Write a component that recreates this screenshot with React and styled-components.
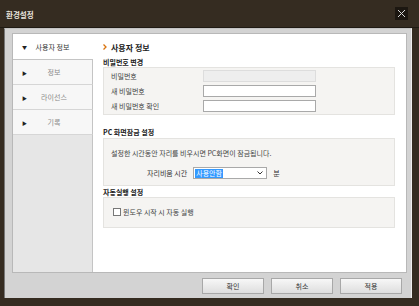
import React from 'react';
import styled, { createGlobalStyle } from 'styled-components';

const GlobalStyle = createGlobalStyle`
  html, body {
    margin: 0;
    padding: 0;
    background: #352c21;
  }
  * {
    box-sizing: border-box;
  }
  body {
    font-family: "Noto Sans CJK KR", "Noto Sans", sans-serif;
    font-size: 7px;
    color: #333;
  }
`;

const Window = styled.div`
  width: 419px;
  height: 306px;
  background: #352c21;
  display: flex;
  flex-direction: column;
  overflow: hidden;
`;

const TitleBar = styled.div`
  height: 28px;
  display: flex;
  align-items: center;
  justify-content: space-between;
  padding: 0 11px 1px 6px;
  border-bottom: 1px solid #1f1a13;
`;

const Title = styled.span`
  color: #e8e4de;
  font-size: 7.5px;
  font-weight: bold;
  margin-top: 2px;
`;

const CloseButton = styled.div`
  width: 13px;
  height: 13px;
  background: #1c1711;
  display: flex;
  align-items: center;
  justify-content: center;
`;

const Frame = styled.div`
  margin: 0 7px 8px 4px;
  flex: 1;
  background: #d3d3d3;
  border-left: 1px solid #777;
  border-top: 1px solid #c4c4c4;
  border-right: 1px solid #eee;
  padding: 4px 4px 0 7px;
  display: flex;
  flex-direction: column;
`;

const Panel = styled.div`
  height: 240px;
  background: #fff;
  border: 1px solid #b8b8b8;
  display: flex;
`;

const Sidebar = styled.div`
  width: 80px;
  display: flex;
  flex-direction: column;
`;

const NavItem = styled.div`
  height: ${p => (p.$active ? 26 : 25)}px;
  display: flex;
  align-items: center;
  padding-left: 9px;
  background: ${p => (p.$active ? '#fff' : '#f7f7f7')};
  border-right: ${p => (p.$active ? 'none' : '1px solid #c4c4c4')};
  border-bottom: 1px solid ${p => (p.$active ? '#c4c4c4' : '#d6d6d6')};
  color: ${p => (p.$active ? '#333' : '#8a8a8a')};
`;

const Arrow = styled.span`
  width: 4px;
  font-size: 5px;
  color: #222;
`;

const NavLabel = styled.span`
  flex: 1;
  text-align: center;
  padding-right: ${p => (p.$active ? 14 : 10)}px;
`;

const SideFill = styled.div`
  flex: 1;
  background: #e6e6e6;
  border-right: 1px solid #c4c4c4;
`;

const Main = styled.div`
  flex: 1;
  padding: 7px 11px 0 10px;
  display: flex;
  flex-direction: column;
`;

const PageHeader = styled.div`
  display: flex;
  align-items: center;
  gap: 4px;
  font-size: 8px;
  font-weight: bold;
  color: #222;
  height: 12px;
  margin-bottom: 4px;
`;

const SectionTitle = styled.div`
  font-weight: bold;
  color: #222;
  height: ${p => p.$h || 10}px;
  display: flex;
  align-items: ${p => (p.$bottom ? 'flex-end' : 'center')};
  padding-bottom: ${p => (p.$bottom ? 1 : 0)}px;
`;

const Box = styled.div`
  background: #f5f4f2;
  border: 1px solid #e4e3e0;
  padding: ${p => p.$pad || '0'};
  display: flex;
  flex-direction: column;
`;

const FormRow = styled.div`
  display: flex;
  align-items: center;
  height: ${p => p.$h || 15}px;
  padding-left: 7px;
`;

const Label = styled.span`
  width: 92px;
  color: #444;
`;

const TextInput = styled.div`
  width: 113px;
  height: 12px;
  background: ${p => (p.$disabled ? '#eeeeee' : '#fff')};
  border: 1px solid ${p => (p.$disabled ? '#ddd' : '#a9a9a9')};
`;

const Note = styled.div`
  color: #444;
  padding-left: 7px;
  height: 14px;
  display: flex;
  align-items: center;
`;

const SelectRow = styled.div`
  display: flex;
  align-items: center;
  padding-left: 43px;
  gap: 6px;
  height: 14px;
  margin-top: 6px;
`;

const Select = styled.div`
  width: 74px;
  height: 12px;
  background: #fff;
  border: 1px solid #a9a9a9;
  display: flex;
  align-items: center;
  justify-content: space-between;
  padding: 0 3px 0 1px;
`;

const Highlight = styled.span`
  background: #3399ff;
  color: #fff;
  padding: 0 1px;
  line-height: 9px;
`;

const CheckRow = styled.label`
  display: flex;
  align-items: center;
  gap: 2px;
  padding-left: 9px;
  color: #444;
`;

const CheckBox = styled.span`
  width: 8px;
  height: 8px;
  background: #fff;
  border: 1px solid #777;
`;

const Footer = styled.div`
  flex: 1;
  display: flex;
  justify-content: flex-end;
  align-items: flex-start;
  padding: 5px 5px 0 0;
  gap: 7px;
`;

const Button = styled.div`
  width: 62px;
  height: 16px;
  border: 1px solid #a8a8a8;
  background: linear-gradient(#f7f7f7, #dedede);
  display: flex;
  align-items: center;
  justify-content: center;
  color: #333;
`;

const navItems = ['정보', '라이선스', '기록'];

export default function App() {
  return (
    <Window>
      <GlobalStyle />
      <TitleBar>
        <Title>환경설정</Title>
        <CloseButton>
          <svg width="9" height="9" viewBox="0 0 9 9">
            <path d="M1 1L8 8M8 1L1 8" stroke="#d8d8d8" strokeWidth="1" />
          </svg>
        </CloseButton>
      </TitleBar>
      <Frame>
        <Panel>
          <Sidebar>
            <NavItem $active>
              <Arrow>▼</Arrow>
              <NavLabel $active>사용자 정보</NavLabel>
            </NavItem>
            {navItems.map(item => (
              <NavItem key={item}>
                <Arrow>▶</Arrow>
                <NavLabel>{item}</NavLabel>
              </NavItem>
            ))}
            <SideFill />
          </Sidebar>
          <Main>
            <PageHeader>
              <svg width="4" height="6" viewBox="0 0 4 6">
                <path d="M0.5 0.5L3 3L0.5 5.5" stroke="#d9730d" strokeWidth="1.3" fill="none" />
              </svg>
              사용자 정보
            </PageHeader>
            <SectionTitle>비밀번호 변경</SectionTitle>
            <Box $pad="1px 0 1px">
              <FormRow $h={14}>
                <Label>비밀번호</Label>
                <TextInput $disabled />
              </FormRow>
              <FormRow>
                <Label>새 비밀번호</Label>
                <TextInput />
              </FormRow>
              <FormRow>
                <Label>새 비밀번호 확인</Label>
                <TextInput />
              </FormRow>
            </Box>
            <SectionTitle $h={23} $bottom>PC 화면잠금 설정</SectionTitle>
            <Box $pad="7px 0 5px">
              <Note>설정한 시간동안 자리를 비우시면 PC화면이 잠금됩니다.</Note>
              <SelectRow>
                <span>자리비움 시간</span>
                <Select>
                  <Highlight>사용안함</Highlight>
                  <svg width="6" height="4" viewBox="0 0 6 4">
                    <path d="M0.5 0.5L3 3L5.5 0.5" stroke="#333" strokeWidth="1" fill="none" />
                  </svg>
                </Select>
                <span>분</span>
              </SelectRow>
            </Box>
            <SectionTitle $h={11}>자동실행 설정</SectionTitle>
            <Box $pad="9px 0 10px">
              <CheckRow>
                <CheckBox />
                윈도우 시작 시 자동 실행
              </CheckRow>
            </Box>
          </Main>
        </Panel>
        <Footer>
          <Button>확인</Button>
          <Button>취소</Button>
          <Button>적용</Button>
        </Footer>
      </Frame>
    </Window>
  );
}
